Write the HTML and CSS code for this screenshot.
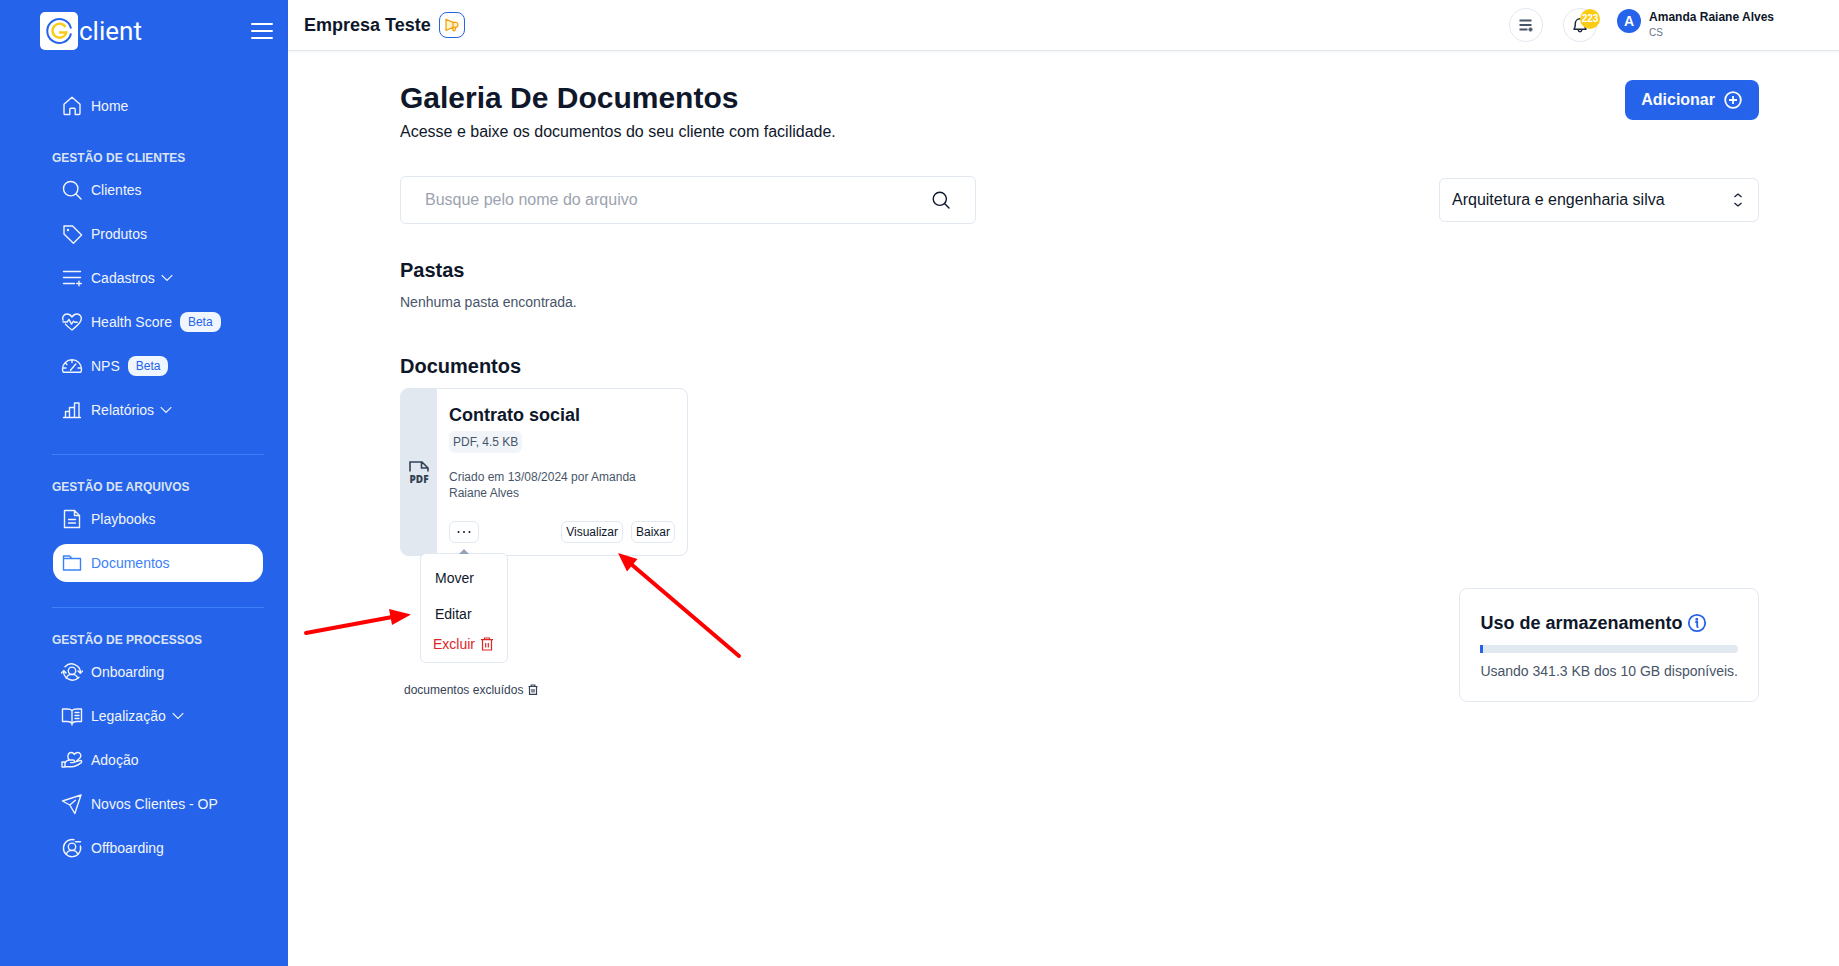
FILE: index.html
```html
<!DOCTYPE html>
<html lang="pt-BR">
<head>
<meta charset="utf-8">
<title>Galeria De Documentos</title>
<link rel="stylesheet" href="styles.css">
</head>
<body>
<div class="app">
  <aside class="sidebar">
    <div class="brand-row">
      <a class="brand" href="#">
        <svg class="brand-mark" viewBox="0 0 38 38" aria-hidden="true">
          <rect width="38" height="38" rx="5" fill="#fff"/>
          <path d="M31 16.500A12 12 0 1 0 31 21.500" fill="none" stroke="#2563eb" stroke-width="2"/>
          <path d="M25.500 15A7 7 0 1 0 26.300 20.500H19" fill="none" stroke="#facc15" stroke-width="2.400"/>
        </svg>
        <span class="brand-name">client</span>
      </a>
      <button class="menu-toggle" aria-label="Recolher menu">
        <svg width="22" height="18" viewBox="0 0 22 18" fill="none" stroke="currentColor" stroke-width="2" stroke-linecap="round"><path d="M1 2h20M1 9h20M1 16h20"/></svg>
      </button>
    </div>
    <nav class="nav">
      <section class="nav-group">
        <a class="nav-item" href="#"><svg class="nav-icon" viewBox="0 0 22 22"><path d="M3 9.3 11 2.3l8 7v9.2a1 1 0 0 1-1 1h-3.800v-5.300a1 1 0 0 0-1-1H9.800a1 1 0 0 0-1 1v5.300H4a1 1 0 0 1-1-1z"/></svg>Home</a>
      </section>
      <section class="nav-group">
        <h2 class="nav-title">GESTÃO DE CLIENTES</h2>
        <a class="nav-item" href="#"><svg class="nav-icon" viewBox="0 0 22 22"><circle cx="9.700" cy="9.700" r="7.200"/><path d="m15 15 5 5"/></svg>Clientes</a>
        <a class="nav-item" href="#"><svg class="nav-icon" viewBox="0 0 22 22"><path d="M3 3h8.600l9 9.100-8.200 8.100L3 11z"/><circle cx="7" cy="7" r=".5"/></svg>Produtos</a>
        <button class="nav-item"><svg class="nav-icon" viewBox="0 0 22 22"><path d="M2.500 4.500h17M2.500 10.500h17M2.500 16.500h11M18 14.200v4.600M15.700 16.500h4.600"/></svg>Cadastros<svg class="chevron" viewBox="0 0 12 8"><path d="m.700 1.200 5.300 5.300 5.300-5.300"/></svg></button>
        <a class="nav-item" href="#"><svg class="nav-icon" viewBox="0 0 22 22"><path d="M2 9.300C.800 5.800 3 3 6 3c2 0 3.700 1 5 3 1.300-2 3-3 5-3 3 0 5.200 2.800 4 6.300-1 3.200-4.700 6.300-9 9.700-2.700-2-5-4-6.600-5.900"/><path d="M2 11h4.200l1.800-2.600 2.500 4.800 2-3 1.200 1h2.500"/></svg>Health Score<span class="tag">Beta</span></a>
        <a class="nav-item" href="#"><svg class="nav-icon" viewBox="0 0 22 22"><path d="M2.200 17.300C1.700 16.200 1.500 15 1.500 14 1.500 8.900 5.700 4.800 11 4.800s9.500 4.100 9.500 9.200c0 1-.2 2.200-.7 3.300zM11 5v2.500M4.500 8l1.400 1.400M2 13h3M17 13h3M9.500 15.300l5.300-6.300"/></svg>NPS<span class="tag">Beta</span></a>
        <button class="nav-item"><svg class="nav-icon" viewBox="0 0 22 22"><path d="M2.500 18.500h17M4.500 18v-5.500h4M8.500 18V8.500h5M13.500 18V4h4.500v14M8.500 12.500V18M13.500 8.500V18"/></svg>Relatórios<svg class="chevron" viewBox="0 0 12 8"><path d="m.700 1.200 5.300 5.300 5.300-5.300"/></svg></button>
      </section>
      <section class="nav-group nav-group-ruled">
        <h2 class="nav-title">GESTÃO DE ARQUIVOS</h2>
        <a class="nav-item" href="#"><svg class="nav-icon" viewBox="0 0 22 22"><path d="M3.500 2.500h10l5 5v12h-15zM13.500 2.500v5h5M7.500 11.500h7M7.500 15h7"/></svg>Playbooks</a>
        <a class="nav-item nav-item-active" href="#" aria-current="page"><svg class="nav-icon" viewBox="0 0 22 22"><path d="M2.500 4h6l2.500 2.500h8.500v11.500h-17zM2.500 6.500H11"/></svg>Documentos</a>
      </section>
      <section class="nav-group nav-group-ruled">
        <h2 class="nav-title">GESTÃO DE PROCESSOS</h2>
        <a class="nav-item" href="#"><svg class="nav-icon" viewBox="0 0 22 22"><path d="M4 5.700a9 9 0 0 1 15.500 6M18 16.300A9 9 0 0 1 2.500 10M.500 12l2.200-2.400L5 12M17 10l2.400 2.300L21.600 10"/><circle cx="11" cy="9.800" r="3.700"/><path d="M5.200 17.300c1-3 3-3.900 5.800-3.900s4.800.900 5.800 3.900"/></svg>Onboarding</a>
        <button class="nav-item"><svg class="nav-icon" viewBox="0 0 22 22"><path d="M11 5.500C9.800 4.300 8.500 4 6.500 4h-5v12.500h5c2 0 3.300.500 4.500 2 1.200-1.500 2.500-2 4.500-2h5V4h-5c-2 0-3.300.300-4.500 1.500zM11 5.500v14.500M14 7.500h4M14 10.500h4M14 13.500h4"/></svg>Legalização<svg class="chevron" viewBox="0 0 12 8"><path d="m.700 1.200 5.300 5.300 5.300-5.300"/></svg></button>
        <a class="nav-item" href="#"><svg class="nav-icon" viewBox="0 0 22 22"><path d="M1 13h3v5H1zM4 13.500c1.500-2 3-2.500 5-2.500h3c2 0 2 2.600 0 2.600H9.500M13.500 13.200l5.400-1.600c2-.4 2.400 1.600.8 2.500C17 16 14.500 17.800 11 17.800H4M7.800 10.500C6.200 8 6.800 3.500 10.200 3.500c1.500 0 2.500.700 3.200 1.900.7-1.200 1.800-1.900 3.200-1.900 2.800 0 4 3 2.500 5.200-.7 1-2 2-3.400 3"/></svg>Adoção</a>
        <a class="nav-item" href="#"><svg class="nav-icon" viewBox="0 0 22 22"><path d="M20 2 1.500 8l7.300 4 5 8.500zM8.800 12l5.600-4.800"/></svg>Novos Clientes - OP</a>
        <a class="nav-item" href="#"><svg class="nav-icon" viewBox="0 0 22 22"><path d="M13 2.700A8.600 8.600 0 1 0 19.400 9M14.500 4.700h5"/><circle cx="11" cy="9.800" r="3.700"/><path d="M5.200 17.300c1-3 3-3.900 5.800-3.900s4.800.900 5.800 3.900"/></svg>Offboarding</a>
      </section>
    </nav>
  </aside>

  <div class="page">
    <header class="topbar">
      <strong class="company">Empresa Teste</strong>
      <button class="news" aria-label="Novidades"><svg width="14" height="14" viewBox="0 0 14 14" fill="#fef3c7" stroke="currentColor" stroke-width="1.200" stroke-linejoin="round"><path d="M1 1.200v11.300l7-3.300V4.400zM8 4.400h3.200c2.400.500 2.400 4.300 0 4.800H8zM8 9.200v3.400h1.800l1.200-3.400"/></svg></button>
      <div class="topbar-actions">
        <button class="round" aria-label="Tarefas"><svg width="14" height="14" viewBox="0 0 14 14" fill="none" stroke="#475569" stroke-width="2"><path d="M.500 2.500h12M.500 7h12M.500 11.500h8M11.500 9.500v4M9.500 11.500h4"/></svg></button>
        <button class="round" aria-label="Notificações"><svg width="14" height="16" viewBox="0 0 14 16" fill="none" stroke="currentColor" stroke-width="1.500" stroke-linejoin="round"><path d="M1 12.200C2.500 10.500 2.300 8.500 2.300 6.500a4.700 4.700 0 0 1 9.400 0c0 2 0 4 1.300 5.700zM5.200 13c.3 2.400 3.300 2.400 3.600 0"/></svg><span class="count">223</span></button>
        <div class="user">
          <span class="avatar">A</span>
          <div class="user-text"><strong class="user-name">Amanda Raiane Alves</strong><span class="user-role">CS</span></div>
        </div>
      </div>
    </header>

    <main class="content">
      <div class="heading">
        <div>
          <h1 class="title">Galeria De Documentos</h1>
          <p class="subtitle">Acesse e baixe os documentos do seu cliente com facilidade.</p>
        </div>
        <button class="add">Adicionar<svg width="18" height="18" viewBox="0 0 18 18" fill="none" stroke="currentColor" stroke-width="1.800"><circle cx="9" cy="9" r="7.800"/><path d="M9 5v8M5 9h8"/></svg></button>
      </div>

      <div class="filters">
        <label class="search">
          <input class="search-input" type="text" placeholder="Busque pelo nome do arquivo" aria-label="Busque pelo nome do arquivo">
          <svg width="18" height="18" viewBox="0 0 18 18" fill="none" stroke="currentColor" stroke-width="1.400" stroke-linecap="round"><circle cx="7.800" cy="7.800" r="6.600"/><path d="m12.500 12.500 4.500 4.500"/></svg>
        </label>
        <label class="picker">
          <select class="picker-select" aria-label="Cliente"><option>Arquitetura e engenharia silva</option></select>
          <svg class="picker-icon" viewBox="0 0 10 14" fill="none" stroke="currentColor" stroke-width="1.200"><path d="M1.500 4 5 1l3.500 3M1.500 10 5 13l3.500-3"/></svg>
        </label>
      </div>

      <h2 class="section-title">Pastas</h2>
      <p class="empty">Nenhuma pasta encontrada.</p>

      <h2 class="section-title section-title-next">Documentos</h2>
      <article class="doc">
        <div class="doc-type">
          <svg width="22" height="24" viewBox="0 0 22 24" role="img" aria-label="PDF"><path d="M2 11.500V2h12l6 6v3.500M13.500 2v6H20" fill="none" stroke="#334155" stroke-width="1.600"/><text class="doc-type-text" x="11" y="23" text-anchor="middle">PDF</text></svg>
        </div>
        <div class="doc-body">
          <h3 class="doc-name">Contrato social</h3>
          <span class="doc-meta">PDF, 4.5 KB</span>
          <p class="doc-info">Criado em 13/08/2024 por Amanda Raiane Alves</p>
          <div class="doc-actions">
            <div class="more">
              <button class="small more-button" aria-label="Mais opções"><svg width="14" height="4" viewBox="0 0 14 4" fill="currentColor"><circle cx="1.500" cy="2" r="1"/><circle cx="7" cy="2" r="1"/><circle cx="12.500" cy="2" r="1"/></svg></button>
              <div class="menu">
                <button class="menu-item">Mover</button>
                <button class="menu-item">Editar</button>
                <button class="menu-item menu-danger">Excluir<svg width="12" height="14" viewBox="0 0 12 14" fill="none" stroke="currentColor" stroke-width="1.200"><path d="M0 2.700h12M3.500 2.500V1h5v1.500M1.500 3v10h9V3M4.700 6v4.500M7.300 6v4.500"/></svg></button>
              </div>
            </div>
            <button class="small">Visualizar</button>
            <button class="small">Baixar</button>
          </div>
        </div>
      </article>

      <div class="footer-row">
        <a class="trash" href="#">documentos excluídos<svg width="10" height="12" viewBox="0 0 10 12" fill="none" stroke="currentColor" stroke-width="1.200"><path d="M.500 2.500h9M3.200 2.300V1h3.600v1.300M1.500 3v7.400h7V3M4 5v3.500M6 5v3.500"/></svg></a>
        <section class="storage">
          <h2 class="storage-title">Uso de armazenamento<svg width="20" height="20" viewBox="0 0 20 20" fill="none" stroke="#2563eb" stroke-width="1.800"><circle cx="10" cy="10" r="8.200"/><path d="M8.300 9h1.900v4.400c0 .6.500.8 1.300.8"/><circle cx="9.800" cy="6.200" r=".6" fill="#2563eb"/></svg></h2>
          <div class="bar"><div class="bar-fill"></div></div>
          <p class="storage-text">Usando 341.3 KB dos 10 GB disponíveis.</p>
        </section>
      </div>
    </main>
  </div>
  <svg class="arrows" viewBox="0 0 440 110" aria-hidden="true">
    <path d="M3 83 92 66.500" stroke="#f00" stroke-width="4" stroke-linecap="round"/>
    <path d="m108 64.500-22-5.500 3 16z" fill="#f00"/>
    <path d="M436 106 328 14" stroke="#f00" stroke-width="4" stroke-linecap="round"/>
    <path d="m315 3 9 18.500L334.500 9z" fill="#f00"/>
  </svg>
</div>
</body>
</html>
```
FILE: styles.css
```css
* { box-sizing: border-box; }
body { margin: 0; background: #fff; color: #0f172a; font-family: "Liberation Sans", Arial, sans-serif; font-size: 14px; line-height: 20px; }
h1, h2, h3, p { margin: 0; }
a { color: inherit; text-decoration: none; }
button { font: inherit; color: inherit; background: none; border: 0; padding: 0; margin: 0; cursor: pointer; }
svg { flex: none; }

.app { position: relative; display: flex; min-height: 100vh; }

.sidebar { flex: none; width: 288px; background: #2563eb; color: #f1f5f9; }
.brand-row { display: flex; align-items: center; justify-content: space-between; padding: 12px 15px 0 40px; }
.brand { display: flex; align-items: center; gap: 1px; color: #fff; }
.brand-mark { width: 38px; height: 38px; }
.brand-name { font: 400 26px/36px Roboto, sans-serif; }
.menu-toggle { display: flex; color: #fff; }
.nav { padding: 37px 24px 24px 52px; }
.nav-group { display: flex; flex-direction: column; gap: 6px; margin-bottom: 25px; }
.nav-group-ruled { border-top: 1px solid #3b82f6; padding-top: 24px; }
.nav-title { font-size: 12px; line-height: 16px; font-weight: 700; color: #dbe4f3; }
.nav-title + .nav-item { margin-top: -1px; }
.nav-item { display: flex; align-items: center; gap: 8px; height: 38px; margin: 0 1px; padding: 0 8px; border-radius: 14px; text-align: left; }
.nav-item-active { background: #fff; color: #3b82f6; }
.nav-icon { width: 22px; height: 22px; fill: none; stroke: currentColor; stroke-width: 1.4; stroke-linejoin: round; stroke-linecap: round; }
.chevron { width: 12px; height: 8px; margin-left: -2px; fill: none; stroke: currentColor; stroke-width: 1.2; }
.tag { padding: 2px 8px; border-radius: 8px; background: #eff6ff; color: #2563eb; font-size: 12px; line-height: 16px; }

.page { flex: 1; min-width: 0; }
.topbar { display: flex; align-items: center; height: 51px; padding: 0 65px 0 16px; border-bottom: 1px solid #e2e8f0; box-shadow: 0 1px 2px rgba(0, 0, 0, .05); }
.company { font-size: 18px; line-height: 28px; }
.news { display: grid; place-items: center; width: 26px; height: 26px; margin-left: 8px; border: 1px solid #2563eb; border-radius: 8px; color: #f59e0b; }
.topbar-actions { display: flex; align-items: center; gap: 20px; margin-left: auto; }
.round { position: relative; display: grid; place-items: center; width: 34px; height: 34px; border: 1px solid #e2e8f0; border-radius: 50%; color: #1e293b; }
.count { position: absolute; top: 0; right: -4px; width: 20px; height: 20px; border-radius: 50%; background: #facc15; color: #fff; font-size: 10px; font-weight: 700; line-height: 20px; text-align: center; }
.user { display: flex; gap: 8px; }
.avatar { width: 24px; height: 24px; border-radius: 50%; background: #2563eb; color: #fff; font-weight: 700; line-height: 24px; text-align: center; }
.user-text { display: flex; flex-direction: column; }
.user-name { font-size: 12px; line-height: 16px; }
.user-role { font-size: 10px; line-height: 16px; color: #64748b; }

.content { padding: 29px 80px 40px 112px; }
.heading { display: flex; justify-content: space-between; align-items: flex-start; }
.title { font-size: 30px; line-height: 36px; font-weight: 700; }
.subtitle { margin-top: 4px; font-size: 16px; line-height: 24px; }
.add { display: flex; align-items: center; gap: 9px; height: 40px; padding: 0 17px 0 16px; border-radius: 8px; background: #2563eb; color: #f8fafc; font-size: 16px; font-weight: 700; }
.filters { display: flex; align-items: center; justify-content: space-between; gap: 24px; margin-top: 32px; }
.search { display: flex; align-items: center; flex: 0 1 576px; height: 48px; padding: 0 25px 0 24px; border: 1px solid #e2e8f0; border-radius: 6px; }
.search-input { flex: 1; min-width: 0; padding: 0; border: 0; outline: 0; background: none; font: inherit; font-size: 16px; color: inherit; }
.search-input::placeholder { color: #9ca3af; opacity: 1; }
.picker { display: grid; align-items: center; flex: 0 1 320px; }
.picker-select { grid-area: 1 / 1; width: 100%; height: 44px; padding: 0 12px; border: 1px solid #e2e8f0; border-radius: 6px; background: #fff; color: inherit; font: inherit; font-size: 16px; appearance: none; }
.picker-icon { grid-area: 1 / 1; justify-self: end; width: 10px; height: 14px; margin-right: 16px; pointer-events: none; }
.section-title { margin-top: 32px; font-size: 20px; line-height: 28px; font-weight: 700; }
.section-title-next { margin-top: 40px; }
.empty { margin-top: 8px; color: #475569; }

.doc { display: flex; width: 288px; margin-top: 8px; border: 1px solid #e2e8f0; border-radius: 8px; }
.doc-type { display: grid; place-items: center; flex: none; width: 36px; border-radius: 7px 0 0 7px; background: #e2e8f0; }
.doc-type-text { font: 800 10px "Open Sans", sans-serif; fill: #334155; }
.doc-body { flex: 1; padding: 12px; }
.doc-name { font-size: 18px; line-height: 28px; }
.doc-meta { display: table; margin-top: 2px; padding: 3px 4px; border-radius: 6px; background: #f1f5f9; color: #475569; font-size: 12px; line-height: 16px; }
.doc-info { margin-top: 16px; color: #475569; font-size: 12px; line-height: 16px; }
.doc-actions { display: flex; gap: 8px; margin-top: 20px; }
.small { height: 22px; padding: 0 4px; border: 1px solid #e2e8f0; border-radius: 6px; font-size: 12px; line-height: 16px; }
.more { position: relative; margin-right: auto; }
.more-button { display: grid; place-items: center; width: 30px; }
.menu { position: absolute; top: 32px; left: 50%; z-index: 1; display: flex; flex-direction: column; width: 88px; margin-left: -44px; padding: 6px 8px 6px 12px; border: 1px solid #e2e8f0; border-radius: 6px; background: #fff; }
.menu::before { content: ""; position: absolute; bottom: 100%; left: 50%; margin-left: -5px; border: 5px solid transparent; border-top: 0; border-bottom-color: #94a3b8; }
.menu-item { height: 36px; padding-left: 2px; text-align: left; }
.menu-danger { display: flex; align-items: center; gap: 6px; height: 24px; padding-left: 0; color: #dc2626; }

.footer-row { display: flex; align-items: flex-end; justify-content: space-between; margin-top: 32px; }
.trash { display: flex; align-items: center; gap: 5px; height: 24px; padding: 0 4px; color: #334155; font-size: 12px; }
.storage { padding: 20px; border: 1px solid #e2e8f0; border-radius: 8px; }
.storage-title { display: flex; align-items: center; gap: 5px; font-size: 18px; line-height: 28px; }
.bar { height: 8px; margin-top: 8px; border-radius: 0 4px 4px 0; background: #e2e8f0; overflow: hidden; }
.bar-fill { width: 3px; height: 100%; background: #2563eb; }
.storage-text { margin-top: 8px; color: #475569; }

.arrows { position: absolute; top: 550px; left: 303px; width: 440px; height: 110px; z-index: 2; fill: none; pointer-events: none; }
```
